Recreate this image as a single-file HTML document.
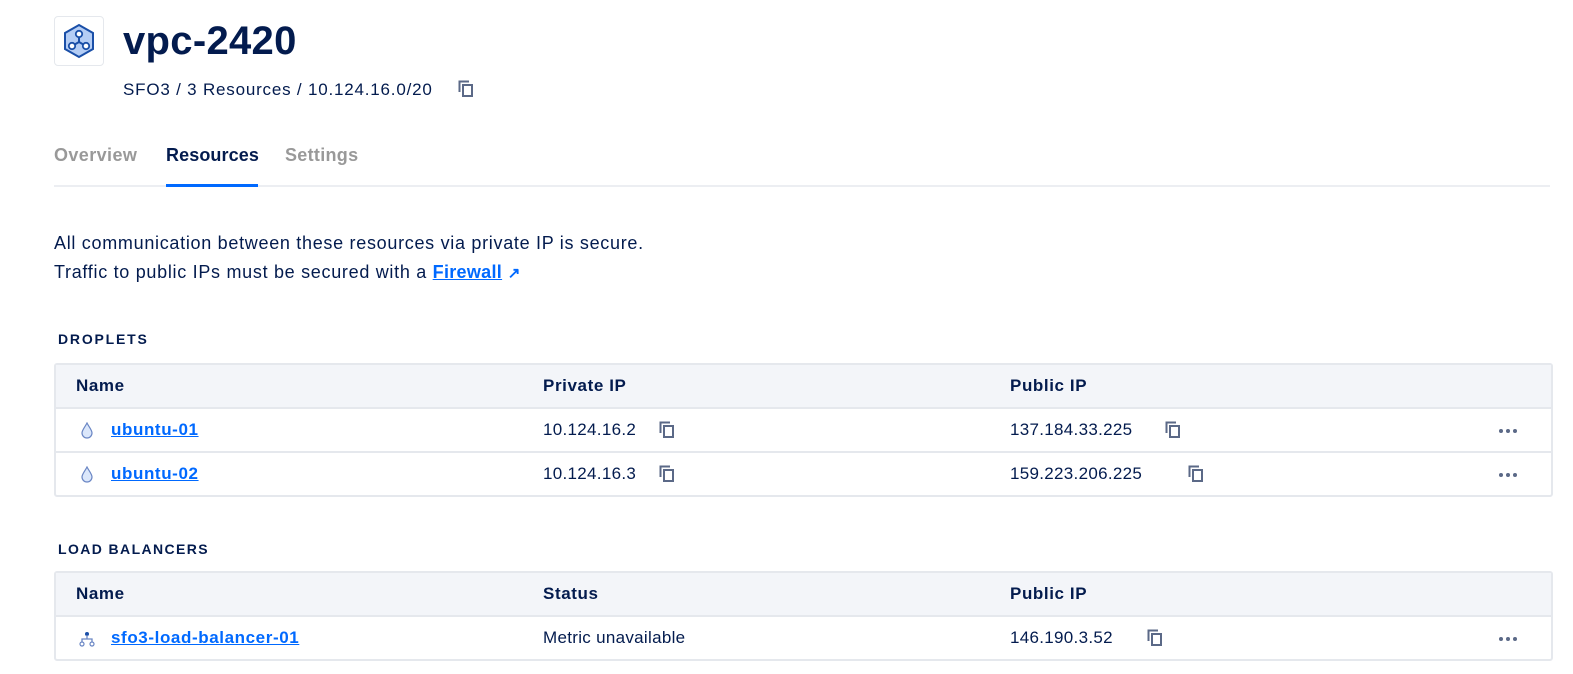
<!DOCTYPE html>
<html><head><style>
*{margin:0;padding:0;box-sizing:border-box}
body{width:1573px;height:674px;background:#fff;font-family:"Liberation Sans",sans-serif;color:#031b4e;position:relative;overflow:hidden}
.a{position:absolute;white-space:nowrap}
.t{position:absolute;left:54px;width:1499px;border:2px solid #e5e8ed;border-radius:3px}
.r{position:relative;height:44px;border-top:2px solid #e5e8ed}
.r:first-child{border-top:none;background:#f3f5f9;height:42px}
.c{position:absolute;top:0;line-height:42px;font-size:17px;letter-spacing:0.3px}
.h{font-weight:bold;letter-spacing:0.6px}
a{color:#0069ff;text-decoration:underline;font-weight:bold;letter-spacing:0.6px}
.cp{position:absolute;width:16px;height:17px}
.dots{position:absolute;right:34px;top:20px;font-size:0}
.dots i{display:inline-block;width:4px;height:4px;border-radius:50%;background:#5b6987;margin-left:3px}
</style></head><body>
<svg width="0" height="0" style="position:absolute"><defs><g id="cp"><path d="M1.5 12V1.5H11" fill="none" stroke="#5b6987" stroke-width="2"/><rect x="5" y="5" width="9" height="11" fill="none" stroke="#5b6987" stroke-width="2"/></g></defs></svg>
<div class="a" style="left:54px;top:16px;width:50px;height:50px;border:1px solid #e5e8ed;border-radius:4px"></div>
<svg class="a" style="left:62px;top:23px" width="34" height="36" viewBox="0 0 34 36"><path d="M17 2L31 10V26L17 34L3 26V10Z" fill="#b4cdf5" stroke="#1a4fa8" stroke-width="2"/><path d="M17 11V19L10 23M17 19L24 23" stroke="#1a4fa8" stroke-width="2" fill="none"/><circle cx="17" cy="11" r="3.2" fill="#fff" stroke="#1a4fa8" stroke-width="1.8"/><circle cx="10" cy="23" r="3.2" fill="#fff" stroke="#1a4fa8" stroke-width="1.8"/><circle cx="24" cy="23" r="3.2" fill="#fff" stroke="#1a4fa8" stroke-width="1.8"/></svg>
<div class="a" style="left:123px;top:17px;font-size:40px;font-weight:bold;line-height:48px;letter-spacing:0.3px">vpc-2420</div>
<div class="a" style="left:123px;top:79px;font-size:17px;line-height:22px;letter-spacing:0.8px">SFO3 / 3 Resources / 10.124.16.0/20</div>
<svg class="cp" style="left:458px;top:80px" viewBox="0 0 16 17"><use href="#cp"/></svg>
<div class="a" style="left:54px;top:144px;font-size:18px;font-weight:bold;color:#999;line-height:22px;letter-spacing:0.4px">Overview</div>
<div class="a" style="left:166px;top:144px;font-size:18px;font-weight:bold;line-height:22px;letter-spacing:0.1px">Resources</div>
<div class="a" style="left:285px;top:144px;font-size:18px;font-weight:bold;color:#999;line-height:22px;letter-spacing:0.3px">Settings</div>
<div class="a" style="left:54px;top:185px;width:1496px;height:2px;background:#eceef2"></div>
<div class="a" style="left:166px;top:184px;width:92px;height:3px;background:#0069ff"></div>
<div class="a" style="left:54px;top:231px;font-size:18px;line-height:24px;letter-spacing:0.7px">All communication between these resources via private IP is secure.</div>
<div class="a" style="left:54px;top:260px;font-size:18px;line-height:24px;letter-spacing:0.7px">Traffic to public IPs must be secured with a <a style="letter-spacing:0.3px">Firewall</a> <span style="color:#0069ff;font-weight:bold;font-size:15px">↗</span></div>
<div class="a" style="left:58px;top:330px;font-size:14px;font-weight:bold;letter-spacing:1.8px;line-height:18px">DROPLETS</div>
<div class="t" style="top:363px">
 <div class="r"><div class="c h" style="left:20px">Name</div><div class="c h" style="left:487px">Private IP</div><div class="c h" style="left:954px">Public IP</div></div>
 <div class="r"><svg class="a" style="left:25px;top:13px" width="12" height="17" viewBox="0 0 12 17"><path d="M6 1C4 5 1 8 1 11a5 5 0 0 0 10 0C11 8 8 5 6 1Z" fill="#dbe7fb" stroke="#6a86c4" stroke-width="1.2"/></svg><div class="c" style="left:55px"><a>ubuntu-01</a></div><div class="c" style="left:487px">10.124.16.2</div><svg class="cp" style="left:603px;top:12px" viewBox="0 0 16 17"><use href="#cp"/></svg><div class="c" style="left:954px">137.184.33.225</div><svg class="cp" style="left:1109px;top:12px" viewBox="0 0 16 17"><use href="#cp"/></svg><div class="dots"><i></i><i></i><i></i></div></div>
 <div class="r"><svg class="a" style="left:25px;top:13px" width="12" height="17" viewBox="0 0 12 17"><path d="M6 1C4 5 1 8 1 11a5 5 0 0 0 10 0C11 8 8 5 6 1Z" fill="#dbe7fb" stroke="#6a86c4" stroke-width="1.2"/></svg><div class="c" style="left:55px"><a>ubuntu-02</a></div><div class="c" style="left:487px">10.124.16.3</div><svg class="cp" style="left:603px;top:12px" viewBox="0 0 16 17"><use href="#cp"/></svg><div class="c" style="left:954px">159.223.206.225</div><svg class="cp" style="left:1132px;top:12px" viewBox="0 0 16 17"><use href="#cp"/></svg><div class="dots"><i></i><i></i><i></i></div></div>
</div>
<div class="a" style="left:58px;top:540px;font-size:14px;font-weight:bold;letter-spacing:1.4px;line-height:18px">LOAD BALANCERS</div>
<div class="t" style="top:571px;height:90px">
 <div class="r"><div class="c h" style="left:20px">Name</div><div class="c h" style="left:487px">Status</div><div class="c h" style="left:954px">Public IP</div></div>
 <div class="r"><svg class="a" style="left:23px;top:14px" width="16" height="16" viewBox="0 0 16 16"><circle cx="8" cy="3" r="2" fill="#1a4fa8"/><path d="M8 4V8M3 12V8H13V12" fill="none" stroke="#6a86c4" stroke-width="1.3"/><circle cx="3" cy="13" r="2" fill="#fff" stroke="#6a86c4" stroke-width="1.2"/><circle cx="13" cy="13" r="2" fill="#fff" stroke="#6a86c4" stroke-width="1.2"/></svg><div class="c" style="left:55px"><a>sfo3-load-balancer-01</a></div><div class="c" style="left:487px">Metric unavailable</div><div class="c" style="left:954px">146.190.3.52</div><svg class="cp" style="left:1091px;top:12px" viewBox="0 0 16 17"><use href="#cp"/></svg><div class="dots"><i></i><i></i><i></i></div></div>
</div>
</body></html>
